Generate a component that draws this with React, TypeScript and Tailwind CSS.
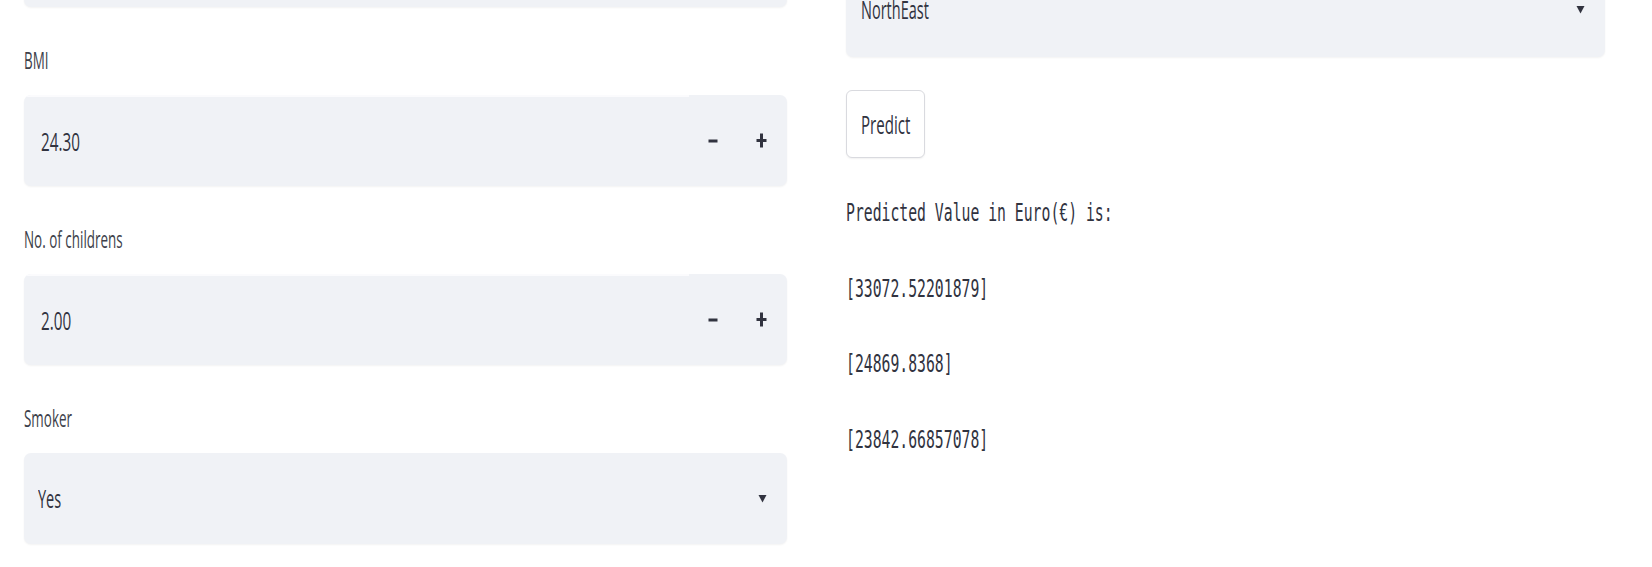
import React from 'react';

const sans = { fontFamily: '"Open Sans", "Noto Sans", sans-serif' };

const Label: React.FC<{ text: string }> = ({ text }) => (
  <div className="h-[70px] mt-[18px] flex items-center">
    <span className="inline-block origin-left scale-x-[0.56] whitespace-nowrap text-[24px] text-[#3d3f4a]">
      {text}
    </span>
  </div>
);

const Caret = () => (
  <svg width="9" height="9" viewBox="0 0 9 9" className="text-[#31333f]">
    <path d="M0.5 1 L8.5 1 L4.5 8.5 Z" fill="currentColor" />
  </svg>
);

const NumberInput: React.FC<{ value: string }> = ({ value }) => (
  <div className="h-[91px] flex rounded-[7px] bg-[#f0f2f6] shadow-[0_1px_2px_rgba(0,0,0,0.05)] overflow-hidden">
    <div className="flex-1 flex items-center pl-[17px] border-t-2 border-[#fbfbfd]">
      <span className="inline-block origin-left scale-x-[0.61] whitespace-nowrap text-[25px] text-[#31333f]">
        {value}
      </span>
    </div>
    <div className="w-[98px] flex">
      <button className="w-[48px] flex items-center justify-center">
        <svg width="10" height="4" viewBox="0 0 10 4">
          <rect x="0.5" y="0.5" width="9" height="3" fill="#31333f" />
        </svg>
      </button>
      <button className="w-[48px] flex items-center justify-center">
        <svg width="11" height="15" viewBox="0 0 11 15">
          <rect x="4" y="0.5" width="3" height="14" fill="#31333f" />
          <rect x="0.5" y="6" width="10" height="3" fill="#31333f" />
        </svg>
      </button>
    </div>
  </div>
);

const Select: React.FC<{ value: string; className?: string }> = ({ value, className = '' }) => (
  <div
    className={`h-[91px] flex items-center justify-between rounded-[7px] bg-[#f0f2f6] shadow-[0_1px_2px_rgba(0,0,0,0.05)] pl-[14px] pr-[20px] ${className}`}
  >
    <span className="inline-block origin-left scale-x-[0.58] whitespace-nowrap text-[25px] text-[#31333f]">
      {value}
    </span>
    <Caret />
  </div>
);

const Mono: React.FC<{ text: string }> = ({ text }) => (
  <div className="h-[40px] flex items-center">
    <span
      className="inline-block origin-left scale-x-[0.615] whitespace-pre text-[24px] text-[#31333f]"
      style={{ fontFamily: '"DejaVu Sans Mono", "Liberation Mono", monospace' }}
    >
      {text}
    </span>
  </div>
);

export default function App() {
  return (
    <div className="w-[1652px] h-[567px] overflow-hidden bg-white" style={sans}>
      <div className="flex pl-[24px] gap-[59px]">
        {/* left column */}
        <div className="w-[763px] flex flex-col">
          <div className="h-[91px] mt-[-84px] rounded-[7px] bg-[#f0f2f6] shadow-[0_1px_2px_rgba(0,0,0,0.05)]" />
          <Label text="BMI" />
          <NumberInput value="24.30" />
          <Label text="No. of childrens" />
          <NumberInput value="2.00" />
          <Label text="Smoker" />
          <Select value="Yes" />
        </div>

        {/* right column */}
        <div className="w-[759px] flex flex-col">
          <Select value="NorthEast" className="mt-[-34px] pl-[15px] pb-[4px]" />
          <button className="mt-[33px] h-[68px] w-[79px] flex items-center pl-[14px] rounded-[6px] border border-[#d9dadf] bg-white shadow-[0_1px_2px_rgba(0,0,0,0.06)]">
            <span className="inline-block origin-left scale-x-[0.58] whitespace-nowrap text-[26px] text-[#31333f]">
              Predict
            </span>
          </button>
          <div className="mt-[35px] flex flex-col gap-[35.5px]">
            <Mono text="Predicted Value in Euro(€) is:" />
            <Mono text="[33072.52201879]" />
            <Mono text="[24869.8368]" />
            <Mono text="[23842.66857078]" />
          </div>
        </div>
      </div>
    </div>
  );
}
